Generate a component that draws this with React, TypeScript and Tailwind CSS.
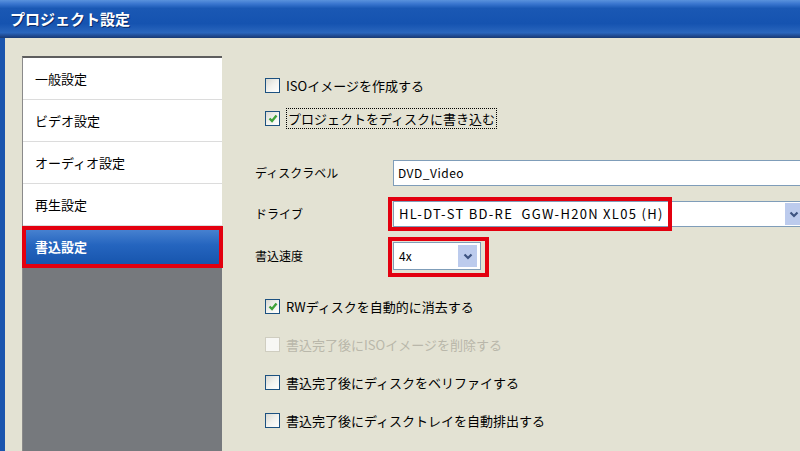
import type { ReactNode } from 'react';

const FONT = { fontFamily: '"Noto Sans CJK JP", "Noto Sans", sans-serif' };

function Chevron() {
  return (
    <svg width="10" height="7" viewBox="0 0 10 7">
      <polyline points="1.5,1.5 5,5 8.5,1.5" fill="none" stroke="#3d5381" strokeWidth="2.2" />
    </svg>
  );
}

function CheckBox({ checked = false, disabled = false }: { checked?: boolean; disabled?: boolean }) {
  return (
    <span
      className={
        'flex h-[15px] w-[15px] shrink-0 items-center justify-center border ' +
        (disabled
          ? 'border-[#cfcdc0] bg-[#f7f7f4]'
          : 'border-[#1c5180] bg-[linear-gradient(135deg,#d9d9d2_0%,#f2f2ee_50%,#ffffff_100%)]')
      }
    >
      {checked && (
        <svg width="10" height="9" viewBox="0 0 10 9">
          <polyline points="1.5,4.5 4,7 8.5,1.5" fill="none" stroke="#3fa23a" strokeWidth="2.4" />
        </svg>
      )}
    </span>
  );
}

function CheckRow({
  label,
  checked,
  disabled,
  focused,
  h,
}: {
  label: string;
  checked?: boolean;
  disabled?: boolean;
  focused?: boolean;
  h: string;
}) {
  return (
    <div className={'ml-[10px] flex items-center gap-[6px] ' + h}>
      <CheckBox checked={checked} disabled={disabled} />
      <span
        className={
          'text-[13px] leading-[19px] ' +
          (disabled ? 'text-[#b9b7aa]' : 'text-black') +
          (focused ? ' border border-dotted border-black px-[1px]' : '')
        }
      >
        {label}
      </span>
    </div>
  );
}

function FieldRow({ label, h, children }: { label: string; h: string; children: ReactNode }) {
  return (
    <div className={'flex items-center ' + h}>
      <span className="w-[138px] shrink-0 text-[12px] text-black">{label}</span>
      {children}
    </div>
  );
}

export default function App() {
  const items = ['一般設定', 'ビデオ設定', 'オーディオ設定', '再生設定'];

  return (
    <div className="flex h-[451px] w-[800px] flex-col overflow-hidden bg-[#e3e2d3]" style={FONT}>
      {/* title bar */}
      <div className="flex h-[38px] shrink-0 items-center bg-[linear-gradient(180deg,#5a92dc_0%,#3a76cf_10%,#1a58b4_22%,#1553b0_62%,#2a66bd_86%,#1d4488_96%,#173a72_100%)] pl-[10px]">
        <span className="text-[15px] font-bold text-white [text-shadow:1px_1px_0_#0b2a66]">
          プロジェクト設定
        </span>
      </div>

      <div className="flex min-h-0 flex-1">
        <div className="w-[5px] shrink-0 bg-[#1a55ae]" />

        {/* left list */}
        <div className="ml-[17px] mt-[18px] flex w-[200px] shrink-0 flex-col border-l border-t-2 border-l-[#8a8a8a] border-t-[#5e5e5e]">
          {items.map((t) => (
            <div key={t} className="flex h-[42px] items-center border-b border-[#dcdcdc] bg-white pl-[12px] text-[13px] text-black">
              {t}
            </div>
          ))}
          <div className="relative flex h-[42px] items-center bg-[linear-gradient(180deg,#4f88d4_0%,#2565bf_45%,#1452aa_100%)] pl-[12px] text-[13px] font-bold text-white">
            書込設定
            <span className="absolute -left-px -right-px bottom-0 top-0 border-[4px] border-[#e3000f]" />
          </div>
          <div className="flex-1 bg-[#76797d]" />
        </div>

        {/* right panel */}
        <div className="flex min-w-0 flex-1 flex-col pl-[33px] pt-[30px]">
          <CheckRow label="ISOイメージを作成する" h="h-[34px]" />
          <CheckRow label="プロジェクトをディスクに書き込む" checked focused h="h-[33px]" />

          <div className="mt-[25px]">
            <FieldRow label="ディスクラベル" h="h-[26px]">
              <div className="flex h-[26px] w-[420px] shrink-0 items-center border border-[#7f9db9] bg-white pl-[4px] text-[12px] tracking-[0.5px] text-black">
                DVD_Video
              </div>
            </FieldRow>
          </div>

          <div className="mt-[15px]">
            <FieldRow label="ドライブ" h="h-[26px]">
              <div className="relative flex h-[26px] w-[412px] shrink-0 items-center border border-[#7f9db9] bg-white pl-[5px] text-[13px] tracking-[1.3px] text-black">
                HL-DT-ST BD-RE&nbsp;&nbsp;GGW-H20N XL05 (H)
                <span className="absolute bottom-px right-px top-px flex w-[18px] items-center justify-center bg-[#bccbed]">
                  <Chevron />
                </span>
                <span className="absolute -left-[6px] -top-[5px] h-[34px] w-[284px] border-[4px] border-[#e3000f]" />
              </div>
            </FieldRow>
          </div>

          <div className="mt-[15px]">
            <FieldRow label="書込速度" h="h-[28px]">
              <div className="relative flex h-[28px] w-[88px] shrink-0 items-center border border-[#7f9db9] bg-white pl-[5px] text-[12px] text-black">
                4x
                <span className="absolute bottom-[2px] right-[3px] top-[2px] flex w-[19px] items-center justify-center bg-[#bccbed]">
                  <Chevron />
                </span>
                <span className="absolute -left-[6px] -top-[6px] h-[40px] w-[101px] border-[4px] border-[#e3000f]" />
              </div>
            </FieldRow>
          </div>

          <div className="mt-[17px] flex flex-col">
            <CheckRow label="RWディスクを自動的に消去する" checked h="h-[38px]" />
            <CheckRow label="書込完了後にISOイメージを削除する" disabled h="h-[38px]" />
            <CheckRow label="書込完了後にディスクをベリファイする" h="h-[38px]" />
            <CheckRow label="書込完了後にディスクトレイを自動排出する" h="h-[38px]" />
          </div>
        </div>
      </div>
    </div>
  );
}
